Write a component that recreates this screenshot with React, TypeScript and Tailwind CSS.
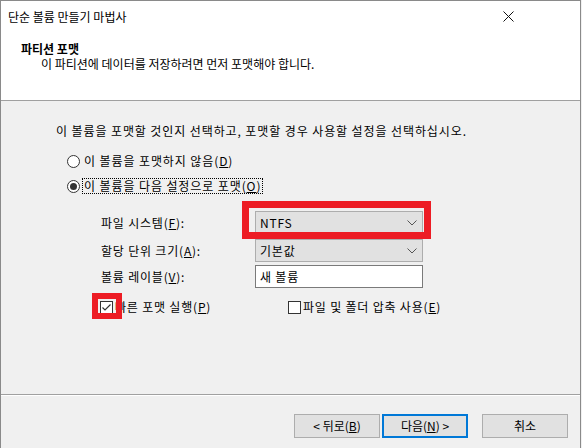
const font = "font-['Noto_Sans_CJK_KR','Noto_Sans',sans-serif]";

function Radio({ checked }: { checked?: boolean }) {
  return (
    <span className="w-[13px] h-[13px] rounded-full border border-[#333333] bg-white flex items-center justify-center shrink-0">
      {checked && <span className="w-[7px] h-[7px] rounded-full bg-[#333333]" />}
    </span>
  );
}

function Check({ checked }: { checked?: boolean }) {
  return (
    <span className="w-[13px] h-[13px] border border-[#333333] bg-white flex items-center justify-center shrink-0">
      {checked && (
        <svg width="11" height="11" viewBox="0 0 11 11">
          <path d="M1.5 5.5 L4 8 L9.5 2.5" fill="none" stroke="#333333" strokeWidth="1.2" />
        </svg>
      )}
    </span>
  );
}

function Chevron() {
  return (
    <svg width="10" height="6" viewBox="0 0 10 6" className="shrink-0">
      <path d="M0.5 0.5 L5 5 L9.5 0.5" fill="none" stroke="#555555" strokeWidth="1" />
    </svg>
  );
}

function Combo({ value }: { value: string }) {
  return (
    <div className="w-[168px] h-[23px] bg-[#e1e1e1] border border-[#adadad] flex items-center justify-between pl-[4px] pr-[5px]">
      <span className="leading-[16px]">{value}</span>
      <Chevron />
    </div>
  );
}

function Row({ label, children, className }: { label: React.ReactNode; children: React.ReactNode; className?: string }) {
  return (
    <div className={`flex items-center ml-[45px] ${className ?? ""}`}>
      <span className="w-[154px] leading-[16px]">{label}</span>
      {children}
    </div>
  );
}

function Button({ children, primary }: { children: React.ReactNode; primary?: boolean }) {
  return (
    <div
      className={`w-[86px] h-[24px] bg-[#e1e1e1] flex items-center justify-center leading-[16px] ${
        primary ? "border-2 border-[#0078d7]" : "border border-[#adadad]"
      }`}
    >
      {children}
    </div>
  );
}

export default function App() {
  return (
    <div className={`relative w-[582px] h-[448px] bg-[#f0f0f0] text-[12px] text-black ${font}`}>
      <div className="w-[581px] h-[448px] border-l border-r border-t border-[#8a8a8a] flex flex-col">
        {/* title bar */}
        <div className="h-[31px] bg-white flex items-center justify-between pl-[7px] pr-[66px] shrink-0">
          <span className="leading-[16px]">단순 볼륨 만들기 마법사</span>
          <svg width="11" height="11" viewBox="0 0 11 11">
            <path d="M0.5 0.5 L10.5 10.5 M10.5 0.5 L0.5 10.5" stroke="#111111" strokeWidth="1" />
          </svg>
        </div>

        {/* header */}
        <div className="h-[69px] bg-white border-b border-[#a0a0a0] pt-[9px] pl-[20px] shrink-0">
          <p className="font-bold leading-[15px]">파티션 포맷</p>
          <p className="leading-[15px] pl-[20px]">이 파티션에 데이터를 저장하려면 먼저 포맷해야 합니다.</p>
        </div>

        {/* body */}
        <div className="h-[293px] pt-[22px] pl-[55px] shrink-0 tracking-[0.8px]">
          <p className="leading-[16px] tracking-[0.9px]">
            이 볼륨을 포맷할 것인지 선택하고, 포맷할 경우 사용할 설정을 선택하십시오.
          </p>

          <div className="flex items-center mt-[14px] ml-[11px] h-[16px]">
            <Radio />
            <span className="ml-[4px] leading-[16px] tracking-[0.9px]">
              이 볼륨을 포맷하지 않음(<u>D</u>)
            </span>
          </div>
          <div className="flex items-center mt-[9px] ml-[11px] h-[16px]">
            <Radio checked />
            <span className="ml-[2px] leading-[14px] border border-dotted border-black px-[1px] tracking-[0.9px]">
              이 볼륨을 다음 설정으로 포맷(<u>O</u>)
            </span>
          </div>

          <Row className="mt-[17px]" label={<>파일 시스템(<u>F</u>):</>}>
            <Combo value="NTFS" />
          </Row>
          <Row className="mt-[5px]" label={<>할당 단위 크기(<u>A</u>):</>}>
            <Combo value="기본값" />
          </Row>
          <Row className="mt-[3px]" label={<>볼륨 레이블(<u>V</u>):</>}>
            <div className="w-[168px] h-[23px] bg-white border border-[#7a7a7a] flex items-center pl-[4px]">
              <span className="leading-[16px]">새 볼륨</span>
            </div>
          </Row>

          <div className="flex items-center mt-[11px] h-[16px]">
            <div className="flex items-center ml-[44px] w-[188px]">
              <Check checked />
              <span className="ml-[2px] leading-[16px]">
                빠른 포맷 실행(<u>P</u>)
              </span>
            </div>
            <Check />
            <span className="ml-[2px] leading-[16px]">
              파일 및 폴더 압축 사용(<u>E</u>)
            </span>
          </div>
        </div>

        {/* separator */}
        <div className="h-[2px] border-t border-[#a0a0a0] border-b border-b-white shrink-0" />

        {/* footer */}
        <div className="flex justify-end items-center mt-[18px] pr-[12px]">
          <Button>
            &lt; 뒤로(<u>B</u>)
          </Button>
          <div className="ml-[2px]">
            <Button primary>
              다음(<u>N</u>) &gt;
            </Button>
          </div>
          <div className="ml-[14px]">
            <Button>취소</Button>
          </div>
        </div>
      </div>

      {/* red annotation frames */}
      <div className="absolute left-[242px] top-[201px] w-[189px] h-[38px] border-[7px] border-[#ed1c24]" />
      <div className="absolute left-[92px] top-[293px] w-[30px] h-[26px] border-[6px] border-[#ed1c24]" />
    </div>
  );
}
